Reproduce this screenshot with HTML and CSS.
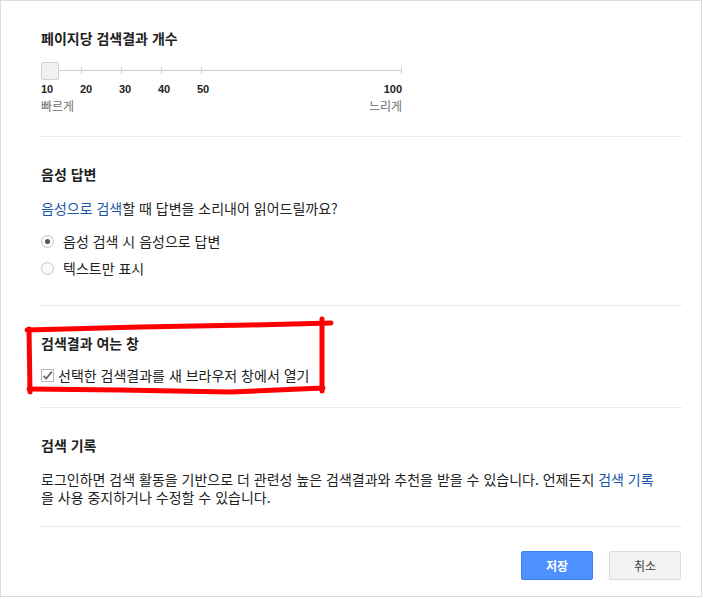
FILE: index.html
```html
<!DOCTYPE html>
<html lang="ko">
  <head>
    <meta charset="UTF-8">
    <title>검색 설정</title>
    <link rel="stylesheet" href="styles.css">
  </head>
  <body>
    <div class="panel">
      <div class="section first">
        <h2>페이지당 검색결과 개수</h2>
        <div class="slider">
          <div class="track"></div>
          <span class="tick" style="left: 40px"></span>
          <span class="tick" style="left: 80px"></span>
          <span class="tick" style="left: 120px"></span>
          <span class="tick" style="left: 160px"></span>
          <span class="tick" style="left: 360px"></span>
          <div class="handle"></div>
        </div>
        <div class="scale">
          <span>10</span>
          <span>20</span>
          <span>30</span>
          <span>40</span>
          <span>50</span>
          <span class="last">100</span>
        </div>
        <div class="speed">
          <span>빠르게</span>
          <span>느리게</span>
        </div>
      </div>

      <div class="section voice">
        <h2>음성 답변</h2>
        <p class="lead"><a href="#">음성으로 검색</a>할 때 답변을 소리내어 읽어드릴까요?</p>
        <label class="option">
          <span class="radio checked"></span>
          음성 검색 시 음성으로 답변
        </label>
        <label class="option">
          <span class="radio"></span>
          텍스트만 표시
        </label>
      </div>

      <div class="section window">
        <h2>검색결과 여는 창</h2>
        <label class="check-row">
          <span class="checkbox">
            <svg width="13" height="13" viewBox="0 0 13 13">
              <path d="M2.5 6.8 L5.2 9.6 L10.8 2.6" fill="none" stroke="#6b6b6b" stroke-width="1.8"/>
            </svg>
          </span>선택한 검색결과를 새 브라우저 창에서 열기
        </label>
      </div>

      <div class="section history">
        <h2>검색 기록</h2>
        <p class="info">
          로그인하면 검색 활동을 기반으로 더 관련성 높은 검색결과와 추천을 받을 수 있습니다. 언제든지 <a href="#">검색 기록</a><br>을 사용 중지하거나 수정할 수 있습니다.
        </p>
      </div>

      <div class="actions">
        <button class="save">저장</button>
        <button class="cancel">취소</button>
      </div>
    </div>

    <!-- red marker drawn over the screenshot -->
    <svg class="marker" width="703" height="599" viewBox="0 0 703 599">
      <g fill="none" stroke="#f00" stroke-width="5" stroke-linecap="round">
        <path d="M27 330 L140 327 L250 325 L331 323"/>
        <path d="M322 319 L322 391"/>
        <path d="M29 329 L30 392"/>
        <path d="M29 389 L120 390 L230 392 L323 388"/>
      </g>
    </svg>
  </body>
</html>
```

FILE: styles.css
```css
body {
  margin: 0;
  background-color: #fff;
  color: #222;
  font-family: "Noto Sans CJK KR", "Liberation Sans", sans-serif;
  font-size: 14px;
}
.panel {
  width: 702px;
  height: 597px;
  box-sizing: border-box;
  border: 1px solid #dcdcdc;
  padding: 0 19px 0 39px;
  display: flex;
  flex-direction: column;
}
.section {
  border-bottom: 1px solid #ebebeb;
  padding: 27px 0 26px 1px;
}
.section.first {
  padding-bottom: 22px;
}
.section.voice {
  padding-bottom: 27px;
}
.section.window {
  padding-bottom: 22px;
}
.section.history {
  padding-bottom: 20px;
}
h2 {
  margin: 0;
  font-size: 14px;
  line-height: 20px;
  font-weight: bold;
  color: #222;
}
a {
  color: #1a55a8;
  text-decoration: none;
}

/* slider */
.slider {
  position: relative;
  width: 361px;
  height: 18px;
  margin-top: 14px;
}
.track {
  position: absolute;
  left: 0;
  right: 0;
  top: 8px;
  height: 1px;
  background-color: #cfcfcf;
}
.tick {
  position: absolute;
  top: 5px;
  width: 1px;
  height: 7px;
  background-color: #cfcfcf;
}
.handle {
  position: absolute;
  left: 0;
  top: 0;
  width: 16px;
  height: 16px;
  border: 1px solid #d0d0d0;
  border-radius: 2px;
  background-color: #f1f1f1;
}
.scale {
  display: flex;
  width: 361px;
  margin-top: 3px;
  font-family: "Liberation Sans", Arial, sans-serif;
  font-weight: bold;
  font-size: 11px;
  line-height: 13px;
  color: #222;
}
.scale span {
  width: 39px;
}
.scale .last {
  width: auto;
  margin-left: auto;
}
.speed {
  display: flex;
  justify-content: space-between;
  width: 361px;
  margin-top: 1px;
  font-size: 12px;
  line-height: 17px;
  color: #6e6e6e;
}

/* voice answers */
.lead {
  margin: 15px 0 0;
  line-height: 18px;
}
.option {
  display: flex;
  align-items: center;
  height: 20px;
  margin-top: 7px;
}
.lead + .option {
  margin-top: 14px;
}
.radio {
  width: 13px;
  height: 13px;
  box-sizing: border-box;
  border: 1px solid #c4c4c4;
  border-radius: 50%;
  background-color: #fafafa;
  margin-right: 9px;
  display: flex;
  align-items: center;
  justify-content: center;
}
.radio.checked::after {
  content: "";
  width: 5px;
  height: 5px;
  border-radius: 50%;
  background-color: #555;
}

/* new window */
.check-row {
  display: flex;
  align-items: center;
  height: 20px;
  margin-top: 12px;
}
.checkbox {
  width: 13px;
  height: 13px;
  box-sizing: border-box;
  border: 1px solid #b5b5b5;
  background-color: #fff;
  margin-right: 4px;
  display: flex;
}
.checkbox svg {
  margin: -1px;
}

/* history */
.info {
  margin: 15px 0 0;
  line-height: 18px;
}

/* buttons */
.actions {
  display: flex;
  justify-content: flex-end;
  gap: 16px;
  padding: 24px 1px 0 0;
}
button {
  width: 72px;
  height: 29px;
  border-radius: 2px;
  font-family: "Noto Sans CJK KR", sans-serif;
  font-size: 12px;
  cursor: pointer;
}
.save {
  background-color: #4d90fe;
  border: 1px solid #3b80ee;
  color: #fff;
  font-weight: bold;
}
.cancel {
  background-color: #f3f3f3;
  border: 1px solid #dcdcdc;
  color: #444;
}

.marker {
  position: absolute;
  left: 0;
  top: 0;
  pointer-events: none;
}
```
